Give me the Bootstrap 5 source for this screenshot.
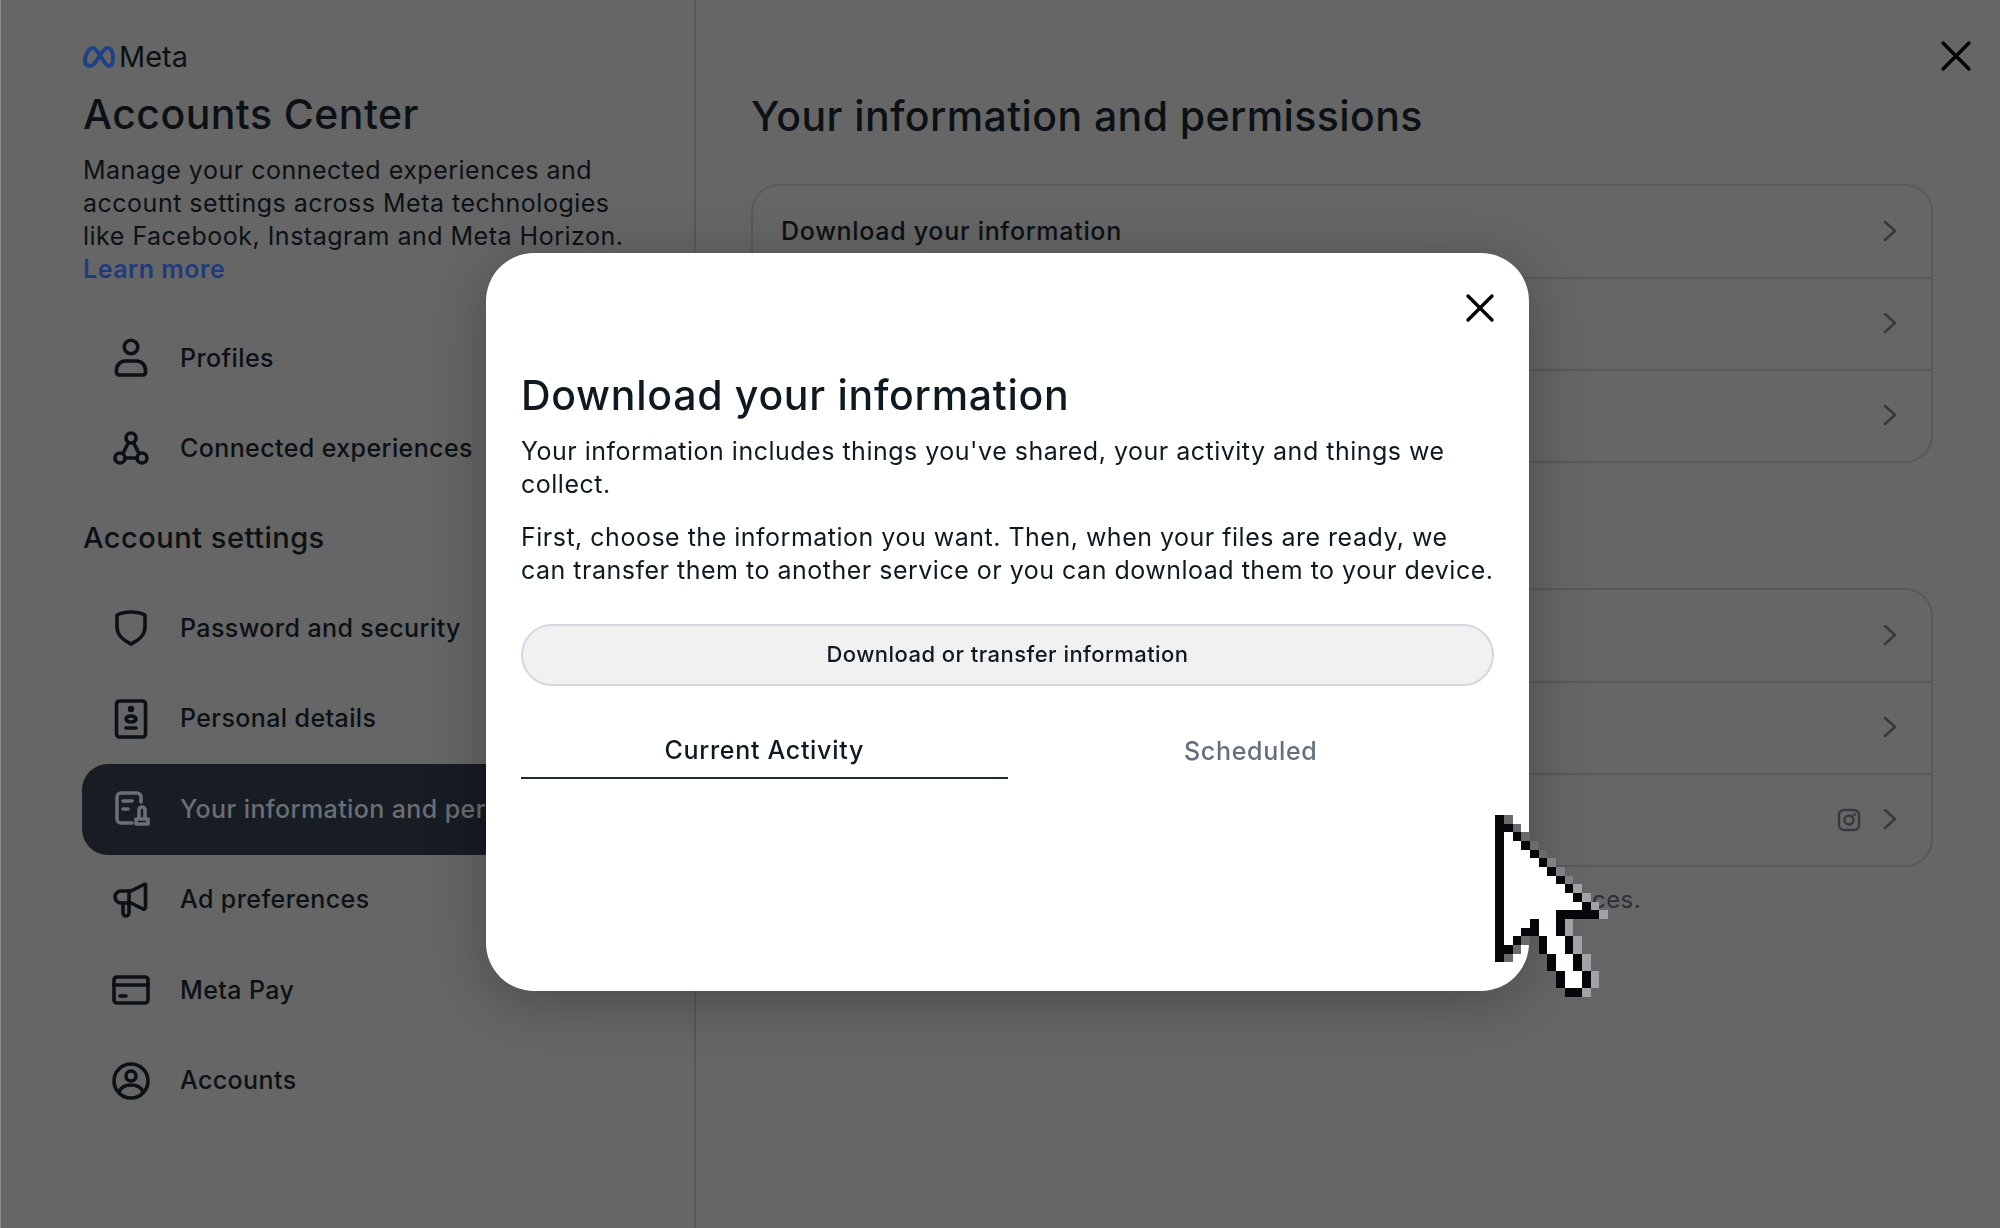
<!DOCTYPE html>
<html lang="en">

<head>
    <meta charset="UTF-8">
    <title>Accounts Center</title>
    <link href="https://cdn.jsdelivr.net/npm/bootstrap@5.3.0/dist/css/bootstrap.min.css" rel="stylesheet">
    <style>
        html, body {
            height: 100%;
            overflow: hidden;
        }

        body {
            background-color: #666;
            color: #0b1114;
            font-family: Inter, "Liberation Sans", sans-serif;
            font-size: 25px;
            letter-spacing: .5px;
            line-height: 33px;
        }

        svg {
            display: block;
            flex-shrink: 0;
        }

        .ac-sidebar {
            width: 696px;
            height: 100%;
            flex-shrink: 0;
            border-left: 1px solid #8f8f8f;
            border-right: 2px solid #595959;
            padding: 44px 56px 0 81px;
        }

        .ac-logo {
            height: 25px;
            font-size: 29px;
            line-height: 25px;
            font-weight: 400;
            letter-spacing: 0;
            margin-left: 1px;
        }

        .ac-title {
            font-size: 41px;
            line-height: 50px;
            font-weight: 550;
            letter-spacing: .45px;
            margin: 20px 0 15px 1px;
        }

        .ac-side-text {
            margin: 0 0 27px 1px;
        }

        .ac-learn {
            color: #1f3b7c;
            font-weight: 600;
            text-decoration: none;
        }

        .ac-item {
            height: 90.5px;
            padding-left: 29px;
            gap: 29px;
            white-space: nowrap;
            font-weight: 500;
            letter-spacing: .4px;
            color: #0b1114;
            text-decoration: none;
        }

        .ac-item svg {
            fill: none;
            stroke: #0b1114;
            stroke-width: 3.6;
            stroke-linecap: round;
            stroke-linejoin: round;
        }

        .ac-item.is-active {
            background-color: #181c23;
            border-radius: 26px;
            color: #6b6f75;
        }

        .ac-item.is-active svg {
            stroke: #6b6f75;
        }

        .ac-subhead {
            font-size: 29px;
            line-height: 36px;
            font-weight: 500;
            letter-spacing: .5px;
            margin: 26px 0 27px 1px;
        }

        .ac-main {
            padding: 91px 67px 0 55px;
        }

        .ac-main-title {
            font-size: 41px;
            line-height: 50px;
            font-weight: 550;
            letter-spacing: .4px;
            margin-bottom: 43px;
        }

        .ac-group {
            border: 2px solid #595959;
            border-radius: 28px;
            margin-bottom: 125px;
        }

        .ac-group.is-last {
            margin-bottom: 16px;
        }

        .ac-row {
            height: 92px;
            padding: 0 34px 0 28px;
            gap: 22px;
            font-weight: 500;
            letter-spacing: .7px;
        }

        .ac-row:first-child {
            height: 91px;
        }

        .ac-row + .ac-row {
            border-top: 2px solid #595959;
        }

        .ac-chevron {
            fill: none;
            stroke: #36383d;
            stroke-width: 2.4;
            stroke-linecap: round;
            stroke-linejoin: round;
        }

        .ac-footnote {
            width: 890px;
            margin: 0;
            font-size: 24px;
            letter-spacing: .4px;
            color: #2c2f34;
            text-align: end;
        }

        .ac-close {
            position: absolute;
            top: 39px;
            right: 27px;
        }

        .ac-cross {
            stroke: #000;
            stroke-width: 3.4;
            stroke-linecap: round;
        }

        .ac-dialog {
            max-width: none;
            width: 1043px;
            margin: 253px 0 0 486px;
        }

        .ac-dialog .modal-content {
            height: 738px;
            border: 0;
            border-radius: 48px;
            padding: 0 35px;
            color: #0f1a20;
            box-shadow: 0 10px 60px rgba(0, 0, 0, .28);
        }

        .ac-dialog-close {
            position: absolute;
            top: 38px;
            right: 32px;
        }

        .ac-dialog-title {
            font-size: 41px;
            line-height: 50px;
            font-weight: 550;
            letter-spacing: .72px;
            margin: 117px 0 15px;
        }

        .ac-dialog p {
            margin-bottom: 20px;
            white-space: nowrap;
        }

        .ac-btn {
            height: 62px;
            margin-top: 17px;
            padding: 6px 12px 8px;
            border: 2px solid #d3d8df;
            border-radius: 31px;
            background-color: #f1f1f2;
            color: #0f1a20;
            font-size: 22px;
            font-weight: 500;
            letter-spacing: .45px;
        }

        .ac-btn:hover {
            background-color: #f1f1f2;
        }

        .ac-tab {
            height: 60px;
            padding-top: 4px;
            font-weight: 500;
            letter-spacing: .7px;
            color: #65707f;
        }

        .ac-tab.is-active {
            color: #0f1a20;
            border-bottom: 2px solid #1c2b33;
        }

        .ac-tabs {
            margin-top: 33px;
        }

        .ac-cursor {
            position: absolute;
            left: 1495px;
            top: 815px;
            z-index: 1060;
            shape-rendering: crispEdges;
        }
    </style>
</head>

<body>
    <div class="d-flex h-100">
        <aside class="ac-sidebar">
            <div class="ac-logo d-flex align-items-center gap-1">
                <svg width="32" height="22" viewBox="0 0 32 22" fill="none" stroke="#1e4187" stroke-width="4">
                    <path d="M2 15C2 8 6 2 10 2c5 0 11 18 16 18 3 0 4-4 4-8 0-6-2-10-6-10-5 0-11 18-16 18-4 0-6-2-6-5z" />
                </svg>
                <span>Meta</span>
            </div>
            <h1 class="ac-title">Accounts Center</h1>
            <div class="ac-side-text">
                Manage your connected experiences and account settings across Meta technologies like Facebook, Instagram and Meta Horizon.<br>
                <a href="#" class="ac-learn">Learn more</a>
            </div>

            <a href="#" class="ac-item d-flex align-items-center">
                <svg width="40" height="40" viewBox="0 0 40 40">
                    <circle cx="20" cy="9" r="6.8" />
                    <path d="M8 37h24a2.500 2.500 0 0 0 2.500-2.500V32a9 9 0 0 0-9-9h-11a9 9 0 0 0-9 9v2.500A2.500 2.500 0 0 0 8 37z" />
                </svg>
                Profiles
            </a>
            <a href="#" class="ac-item d-flex align-items-center">
                <svg width="40" height="40" viewBox="0 0 40 40">
                    <circle cx="20" cy="9" r="5" />
                    <circle cx="9" cy="29" r="5" />
                    <circle cx="31" cy="29" r="5" />
                    <path d="M17.500 13.500L12 24.500M22.500 13.500L28 24.500M14 29h12" />
                </svg>
                Connected experiences
            </a>

            <h2 class="ac-subhead">Account settings</h2>

            <a href="#" class="ac-item d-flex align-items-center">
                <svg width="40" height="40" viewBox="0 0 40 40">
                    <path d="M20 4c5 0 10 1 14 3v12c0 8-7 14-14 17C13 33 6 27 6 19V7c4-2 9-3 14-3z" />
                </svg>
                Password and security
            </a>
            <a href="#" class="ac-item d-flex align-items-center">
                <svg width="40" height="40" viewBox="0 0 40 40">
                    <rect x="5.500" y="2" width="29" height="36" rx="3" />
                    <circle cx="20" cy="10" r="1.400" />
                    <ellipse cx="20" cy="20" rx="5" ry="3" />
                    <path d="M15 29h10" />
                </svg>
                Personal details
            </a>
            <a href="#" class="ac-item is-active d-flex align-items-center">
                <svg width="40" height="40" viewBox="0 0 40 40">
                    <path d="M30 13V8a4 4 0 0 0-4-4H10a4 4 0 0 0-4 4v22a4 4 0 0 0 4 4h11M12 12h9M12 20h5" />
                    <path d="M28 29v-8a3 3 0 0 1 6 0v8M25 30h12v5H25z" />
                </svg>
                Your information and permissions
            </a>
            <a href="#" class="ac-item d-flex align-items-center">
                <svg width="40" height="40" viewBox="0 0 40 40">
                    <path d="M34.500 4.500v23c0 1.500-1 2-2.500 1.500L20 23H10a6 6 0 0 1 0-12h10L32 5c1.500-.8 2.500-.5 2.500-.5z" />
                    <path d="M12 23v10a3 3 0 0 0 6 0V11" />
                </svg>
                Ad preferences
            </a>
            <a href="#" class="ac-item d-flex align-items-center">
                <svg width="40" height="40" viewBox="0 0 40 40">
                    <rect x="3" y="7" width="34" height="26" rx="3" />
                    <path d="M3 15h34M9 26h6" />
                </svg>
                Meta Pay
            </a>
            <a href="#" class="ac-item d-flex align-items-center">
                <svg width="40" height="40" viewBox="0 0 40 40">
                    <circle cx="20" cy="20" r="17" />
                    <circle cx="20" cy="15" r="5" />
                    <path d="M8 31c2-5 6-7 12-7s10 2 12 7" />
                </svg>
                Accounts
            </a>
        </aside>

        <main class="ac-main flex-grow-1">
            <h2 class="ac-main-title">Your information and permissions</h2>

            <div class="ac-group">
                <div class="ac-row d-flex align-items-center justify-content-between">
                    <span>Download your information</span>
                    <svg class="ac-chevron" width="14" height="22" viewBox="0 0 14 22"><path d="M2 1l10 9-10 9" /></svg>
                </div>
                <div class="ac-row d-flex align-items-center justify-content-end">
                    <svg class="ac-chevron" width="14" height="22" viewBox="0 0 14 22"><path d="M2 1l10 9-10 9" /></svg>
                </div>
                <div class="ac-row d-flex align-items-center justify-content-end">
                    <svg class="ac-chevron" width="14" height="22" viewBox="0 0 14 22"><path d="M2 1l10 9-10 9" /></svg>
                </div>
            </div>

            <div class="ac-group is-last">
                <div class="ac-row d-flex align-items-center justify-content-end">
                    <svg class="ac-chevron" width="14" height="22" viewBox="0 0 14 22"><path d="M2 1l10 9-10 9" /></svg>
                </div>
                <div class="ac-row d-flex align-items-center justify-content-end">
                    <svg class="ac-chevron" width="14" height="22" viewBox="0 0 14 22"><path d="M2 1l10 9-10 9" /></svg>
                </div>
                <div class="ac-row d-flex align-items-center justify-content-end">
                    <svg class="ac-chevron" width="24" height="24" viewBox="0 0 24 24">
                        <rect x="2" y="2" width="20" height="20" rx="5" />
                        <circle cx="12" cy="12" r="4.500" />
                        <circle cx="17.500" cy="6.500" r="0.500" />
                    </svg>
                    <svg class="ac-chevron" width="14" height="22" viewBox="0 0 14 22"><path d="M2 1l10 9-10 9" /></svg>
                </div>
            </div>

            <p class="ac-footnote">your ad preferences.</p>
        </main>
    </div>

    <svg class="ac-close" width="34" height="34" viewBox="0 0 34 34">
        <path class="ac-cross" d="M4 4l26 26M30 4L4 30" />
    </svg>

    <div class="modal d-block" tabindex="-1">
        <div class="modal-dialog ac-dialog">
            <div class="modal-content">
                <svg class="ac-dialog-close" width="34" height="34" viewBox="0 0 34 34">
                    <path class="ac-cross" d="M5 5l24 24M29 5L5 29" />
                </svg>
                <h2 class="ac-dialog-title">Download your information</h2>
                <p>Your information includes things you've shared, your activity and things we<br>collect.</p>
                <p>First, choose the information you want. Then, when your files are ready, we<br>can transfer them to another service or you can download them to your device.</p>
                <button type="button" class="btn ac-btn w-100">Download or transfer information</button>
                <div class="ac-tabs d-flex">
                    <div class="ac-tab is-active w-50 d-flex align-items-center justify-content-center">Current Activity</div>
                    <div class="ac-tab w-50 d-flex align-items-center justify-content-center">Scheduled</div>
                </div>
            </div>
        </div>
    </div>

    <svg class="ac-cursor" width="113" height="182" viewBox="0 0 13 21">
        <path fill="#fff" d="M1 2h1v1h1v1h1v1h1v1h1v1h1v1h1v1h1v1h1v1H7v3h1v2h1v2h1v2H8v-2H7v-2H6v-2H5v-2H4v1H3v1H2v1H1z" />
        <path fill="#05070a" d="M0 0h1v17H0zM1 1h1v1H1zM2 2h1v1H2zM3 3h1v1H3zM4 4h1v1H4zM5 5h1v1H5zM6 6h1v1H6zM7 7h1v1H7zM8 8h1v1H8zM9 9h1v1H9zM10 10h1v1h-1zM7 11h5v1H8v2H7zM4 12h1v2H3v-1h1zM2 14h1v1H2zM1 15h1v1H1zM5 14h1v2H5zM6 16h1v2H6zM7 18h1v2H7zM8 14h1v2H8zM9 16h1v2H9zM10 18h1v2h-1zM8 20h2v1H8z" />
        <path fill="#6a6a6a" d="M1 0h1v1H1zM2 1h1v1H2zM3 2h1v1H3zM4 3h1v1H4zM5 4h1v1H5zM3 14h1v1H3zM2 15h1v1H2zM1 16h1v1H1z" />
        <path fill="#7f8083" d="M6 5h1v1H6zM7 6h1v1H7zM8 7h1v1H8z" />
        <path fill="#a0a2a5" d="M9 8h1v1H9zM10 9h1v1h-1zM11 10h1v1h-1zM12 11h1v1h-1zM8 12h1v2H8zM9 14h1v2H9zM10 16h1v2h-1zM11 18h1v2h-1zM10 20h1v1h-1z" />
    </svg>

    <script src="https://cdn.jsdelivr.net/npm/bootstrap@5.3.0/dist/js/bootstrap.bundle.min.js"></script>
</body>

</html>
